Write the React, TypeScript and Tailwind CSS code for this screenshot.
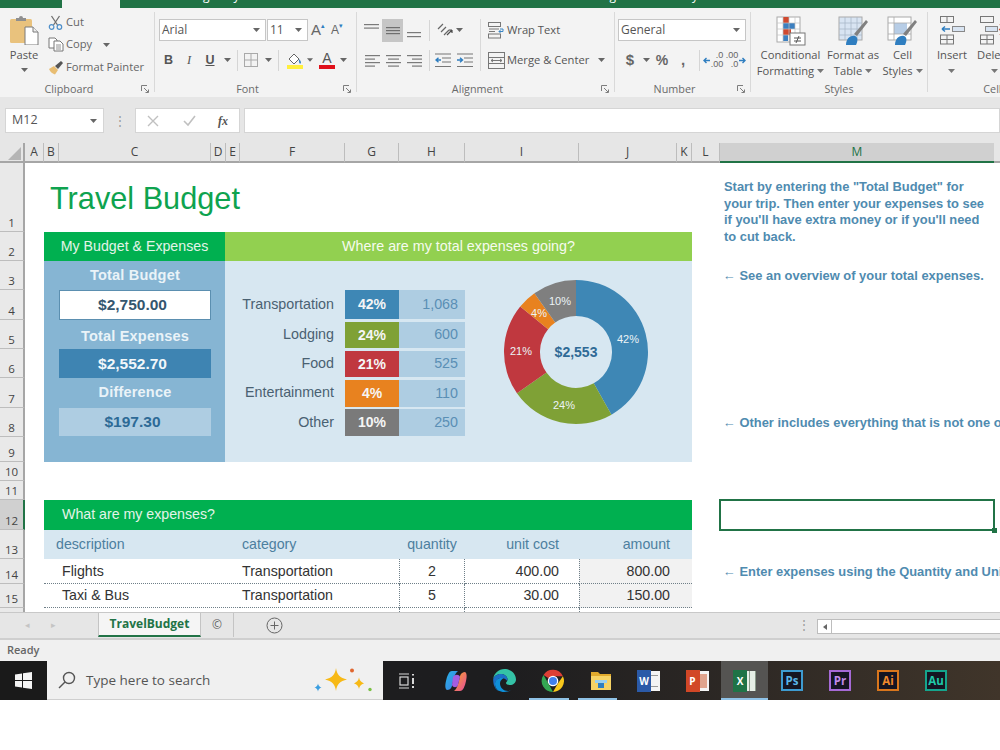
import React from "react";

const Caret = ({ c = "#666" }: { c?: string }) => (
  <svg width="7" height="4" viewBox="0 0 7 4"><path d="M0 0h7L3.5 4z" fill={c} /></svg>
);

const Lines = ({ kind }: { kind: string }) => {
  const rows: Record<string, number[][]> = {
    top: [[1, 3, 15], [1, 6.5, 15], [1, 10, 0]],
    middle: [[2, 6, 14], [2, 9, 14], [2, 12, 14]],
    bottom: [[2, 11, 14], [2, 15, 14]],
    left: [[2, 4, 15], [2, 7.5, 10], [2, 11, 15], [2, 14.5, 10]],
    center: [[2, 4, 15], [4, 7.5, 11], [2, 11, 15], [4, 14.5, 11]],
    right: [[2, 4, 15], [7, 7.5, 10], [2, 11, 15], [7, 14.5, 10]],
  };
  return (
    <svg width="18" height="18" viewBox="0 0 18 18">
      {rows[kind].filter((r) => r[2] > 0).map((r, i) => (
        <rect key={i} x={r[0]} y={r[1]} width={r[2]} height="1.2" fill={kind === "middle" ? "#6f6f6f" : "#7a7a7a"} />
      ))}
    </svg>
  );
};

const Launcher = () => (
  <svg width="9" height="9" viewBox="0 0 9 9" fill="none" stroke="#7d7d7d" strokeWidth="1">
    <path d="M.5 6V.5H6" />
    <path d="M3 3l4 4M4.5 7.5h3v-3" />
  </svg>
);

const PasteIcon = () => (
  <svg width="30" height="30" viewBox="0 0 30 30">
    <rect x="1" y="4" width="22" height="24" rx="1.5" fill="#e9c27d" />
    <path d="M7 6V3h3a2 2 0 014 0h3v3z" fill="#8f8f8f" />
    <path d="M16 12h8l5 5v13H16z" fill="#fff" stroke="#7a7a7a" />
    <path d="M24 12v5h5" fill="#eee" stroke="#7a7a7a" />
  </svg>
);

const CutIcon = () => (
  <svg width="15" height="15" viewBox="0 0 15 15" fill="none">
    <path d="M3.5 1l6 9M11.5 1l-6 9" stroke="#707070" strokeWidth="1.3" />
    <circle cx="3.6" cy="12" r="2.3" stroke="#4e8fc9" strokeWidth="1.2" />
    <circle cx="11.4" cy="12" r="2.3" stroke="#4e8fc9" strokeWidth="1.2" />
  </svg>
);

const CopyIcon = () => (
  <svg width="16" height="15" viewBox="0 0 16 15" fill="#fff" stroke="#777" strokeWidth="1">
    <path d="M1 1h6l2 2v8H1z" />
    <path d="M6 4h6l3 3v7H6z" />
    <path d="M8 8h5M8 10h5M8 12h5" strokeWidth=".8" />
  </svg>
);

const PainterIcon = () => (
  <svg width="16" height="15" viewBox="0 0 16 15">
    <path d="M1 9l5-3 4 4-3 4.5C5 14 2 12 1 9z" fill="#e8bd72" />
    <path d="M7 6l3 3 5-6-2-2z" fill="#555" />
  </svg>
);

const BordersIcon = () => (
  <svg width="14" height="14" viewBox="0 0 14 14" fill="none">
    <rect x=".5" y=".5" width="13" height="13" stroke="#a9a9a9" />
    <path d="M7 .5v13M.5 7h13" stroke="#a9a9a9" />
  </svg>
);

const FillIcon = () => (
  <svg width="18" height="18" viewBox="0 0 18 18">
    <path d="M3 8l5-5 5 5-5 5z" fill="#fff" stroke="#666" />
    <path d="M13 8c2 2 2.5 3.5 1.5 4.5S12.5 11 13 8z" fill="#3b86c4" />
    <rect x="1" y="14" width="16" height="4" fill="#ffef3d" />
  </svg>
);

const OrientIcon = () => (
  <svg width="18" height="18" viewBox="0 0 18 18" fill="none" stroke="#666" strokeWidth="1.2">
    <path d="M2 8l5-5M5 11l5-5M8 14l5-5" />
    <path d="M11 14l5-5M16 9h-3M16 9v3" stroke="#4d4d4d" />
  </svg>
);

const WrapIcon = () => (
  <svg width="17" height="17" viewBox="0 0 17 17" fill="none" stroke="#777">
    <rect x=".5" y=".5" width="12" height="4" />
    <rect x=".5" y="12" width="12" height="4" />
    <path d="M1 7h10M1 9.5h6" />
    <path d="M12 7h3v2.5h-4M12.5 8l-1.5 1.5 1.5 1.5" stroke="#3b86c4" />
  </svg>
);

const MergeIcon = () => (
  <svg width="17" height="17" viewBox="0 0 17 17" fill="none" stroke="#777">
    <rect x=".5" y=".5" width="16" height="16" />
    <path d="M.5 5.5h16M.5 11.5h16M3 8.5h11M3 8.5l2-1.5M3 8.5l2 1.5M14 8.5l-2-1.5M14 8.5l-2 1.5" />
  </svg>
);

const IndentIcon = ({ inc }: { inc?: boolean }) => (
  <svg width="16" height="15" viewBox="0 0 16 15" fill="none">
    <path d="M0 1h16M7 5h9M7 9h9M0 13.5h16" stroke="#777" strokeWidth="1.2" />
    <path d={inc ? "M0 7h5M3 4.8L5.5 7 3 9.2" : "M6 7H1M3.5 4.8L1 7l2.5 2.2"} stroke="#2f7ec0" strokeWidth="1.4" />
  </svg>
);

const DecimalIcon = ({ inc }: { inc?: boolean }) => (
  <div className="flex items-center gap-[1px]">
    {inc && (
      <svg width="7" height="7" viewBox="0 0 7 7" fill="none" stroke="#2f7ec0" strokeWidth="1.4"><path d="M7 3.500H1M3.500 1L1 3.500 3.500 6" /></svg>
    )}
    <div className="flex flex-col items-end text-[9px] leading-[9px] text-[#666] font-['Liberation_Sans',sans-serif]">
      <span>{inc ? ".0" : ".00"}</span>
      <span>{inc ? ".00" : ".0"}</span>
    </div>
    {!inc && (
      <svg width="7" height="7" viewBox="0 0 7 7" fill="none" stroke="#2f7ec0" strokeWidth="1.4"><path d="M0 3.500h6M3.500 1L6 3.500 3.500 6" /></svg>
    )}
  </div>
);

const CondIcon = () => (
  <svg width="30" height="30" viewBox="0 0 30 30">
    <rect x="1" y="1" width="23" height="25" fill="#fff" stroke="#aaa" />
    <rect x="7" y="1" width="6" height="6" fill="#d0492f" />
    <rect x="7" y="7" width="12" height="6" fill="#3d80c0" />
    <rect x="7" y="13" width="8" height="6" fill="#d0492f" />
    <rect x="7" y="19" width="5" height="6" fill="#3d80c0" />
    <path d="M1 7h23M1 13h23M1 19h23M7 1v25M13 1v25M19 1v25" stroke="#c3c3c3" strokeWidth=".7" fill="none" />
    <rect x="14" y="17" width="15" height="12" fill="#fff" stroke="#777" />
    <path d="M18 22h7M18 25h7M23 20l-3 7" stroke="#555" fill="none" />
  </svg>
);

const TableIcon = () => (
  <svg width="31" height="30" viewBox="0 0 31 30">
    <rect x="1" y="1" width="23" height="23" fill="#d8e4f2" stroke="#aaa" />
    <path d="M1 7h23M1 13h23M1 19h23M7 1v23M13 1v23M19 1v23" stroke="#a9b8c9" strokeWidth=".8" fill="none" />
    <path d="M30 6L19 20l-3-2L28 4z" fill="#808080" />
    <path d="M8 29c0-6 4-10 9-9 3 1 3 5 1 9z" fill="#2f7ec0" />
  </svg>
);

const CellStyleIcon = () => (
  <svg width="31" height="30" viewBox="0 0 31 30">
    <rect x="1" y="1" width="23" height="23" fill="#fff" stroke="#aaa" />
    <rect x="7" y="7" width="13" height="11" fill="#b7cde6" />
    <path d="M1 7h23M1 18h23M7 1v23" stroke="#aaa" strokeWidth=".8" fill="none" />
    <path d="M30 6L19 20l-3-2L28 4z" fill="#808080" />
    <path d="M8 29c0-6 4-10 9-9 3 1 3 5 1 9z" fill="#2f7ec0" />
  </svg>
);

const InsertIcon = () => (
  <svg width="27" height="29" viewBox="0 0 27 29" fill="none" stroke="#777">
    <rect x="1.500" y=".5" width="13" height="6" />
    <path d="M8 .5v6" />
    <rect x="1.500" y="19" width="13" height="9" />
    <path d="M8 19v9M1.500 23.500h13" />
    <path d="M3 13h8M3 13l3-2.500M3 13l3 2.500" stroke="#2f7ec0" strokeWidth="1.500" />
    <rect x="13.500" y="10.500" width="12" height="5" fill="#d8e4f2" stroke="#888" />
  </svg>
);

const DeleteIcon = () => (
  <svg width="30" height="29" viewBox="0 0 30 29" fill="none" stroke="#777">
    <rect x="1.500" y=".5" width="13" height="6" />
    <rect x="1.500" y="19" width="13" height="9" />
    <path d="M8 19v9M1.500 23.500h13" />
    <rect x="6.500" y="10.500" width="12" height="5" fill="#d8e4f2" stroke="#888" />
    <path d="M21 8l6 5.500-6 5.500M27 8l-6 5.500 6 5.500" stroke="#d0492f" strokeWidth="1.800" />
  </svg>
);

const Group = ({ label, w, launcher, children }: { label: string; w: string; launcher?: boolean; children: React.ReactNode }) => (
  <div className={`${w} shrink-0 flex flex-col`}>
    <div className="h-[74px]">{children}</div>
    <div className={`relative h-[15px] flex items-center justify-center text-[10.800px] text-[#6a6a6a] ${launcher ? "pr-[16px]" : ""}`}>
      {label}
      {launcher && <span className="absolute right-[4px] top-[3px] flex"><Launcher /></span>}
    </div>
  </div>
);

const Sep = () => <div className="w-[1px] h-[80px] mt-[4px] bg-[#d9d9d9] shrink-0" />;

const Select = ({ text, w }: { text: string; w: string }) => (
  <div className={`${w} h-[22px] bg-white border border-[#c6c6c6] flex items-center justify-between pl-[2px] pr-[5px] text-[12px] text-[#555] shrink-0`}>
    <span>{text}</span>
    <Caret />
  </div>
);

const Btn = ({ w, children }: { w: string; children: React.ReactNode }) => (
  <div className={`${w} h-[22px] flex items-center justify-center shrink-0`}>{children}</div>
);

const VSep = ({ m }: { m: string }) => <div className={`${m} w-[1px] h-[21px] bg-[#d5d5d5] shrink-0`} />;

const BigBtn = ({ w, icon, lines, caret }: { w: string; icon: React.ReactNode; lines: string[]; caret?: boolean }) => (
  <div className={`${w} shrink-0 flex flex-col items-center pt-[7px]`}>
    <div className="h-[31px] flex items-center">{icon}</div>
    <div className="text-[11.200px] leading-[16px] text-[#555] text-center whitespace-nowrap mt-[1px]">
      <div>{lines[0]}</div>
      {caret ? (
        <div className="flex items-center justify-center gap-[3px]">{lines[1]}<Caret c="#777" /></div>
      ) : (
        <div className="h-[16px] flex items-center justify-center"><Caret c="#777" /></div>
      )}
    </div>
  </div>
);

const Ribbon = () => (
  <div className="h-[89px] bg-[#f3f3f3] flex shrink-0 font-['Open_Sans',sans-serif]">
    <Group label="Clipboard" w="w-[154px]" launcher>
      <div className="flex">
        <div className="w-[48px] flex flex-col items-center pt-[7px] text-[11.200px] text-[#555]">
          <PasteIcon />
          <div className="leading-[16px] mt-[2px]">Paste</div>
          <div className="mt-[5px] flex"><Caret /></div>
        </div>
        <div className="flex flex-col pt-[3px] text-[11.200px] text-[#666]">
          {[
            { i: <CutIcon />, t: "Cut", c: false },
            { i: <CopyIcon />, t: "Copy", c: true },
            { i: <PainterIcon />, t: "Format Painter", c: false },
          ].map((r) => (
            <div key={r.t} className="h-[22.500px] flex items-center">
              <span className="w-[18px] flex">{r.i}</span>
              <span>{r.t}</span>
              {r.c && <span className="ml-[11px] flex"><Caret /></span>}
            </div>
          ))}
        </div>
      </div>
    </Group>
    <Sep />
    <Group label="Font" w="w-[201px]" launcher>
      <div className="pl-[4px] pt-[11px]">
        <div className="flex items-center h-[22px]">
          <Select text="Arial" w="w-[107px]" />
          <div className="w-[1px]" />
          <Select text="11" w="w-[41px]" />
          <div className="ml-[3px] w-[20px] flex items-center text-[15px] text-[#666] font-['Liberation_Sans',sans-serif]">A<span className="text-[7px] text-[#2f7ec0] -mt-[8px]">▴</span></div>
          <div className="w-[20px] flex items-center text-[12px] text-[#666] font-['Liberation_Sans',sans-serif]">A<span className="text-[7px] text-[#2f7ec0] -mt-[8px]">▾</span></div>
        </div>
        <div className="flex items-center h-[22px] mt-[8px] text-[#555] font-['Liberation_Sans',sans-serif] text-[12.500px]">
          <Btn w="w-[19px]"><b>B</b></Btn>
          <Btn w="w-[22px]"><i className="font-['Liberation_Serif',serif]">I</i></Btn>
          <Btn w="w-[20px]"><u className="font-bold">U</u></Btn>
          <Btn w="w-[14px]"><Caret /></Btn>
          <VSep m="ml-[3px]" />
          <Btn w="w-[24px] ml-[1px]"><BordersIcon /></Btn>
          <Btn w="w-[10px]"><Caret /></Btn>
          <VSep m="ml-[5px]" />
          <Btn w="w-[24px] ml-[4px]"><FillIcon /></Btn>
          <Btn w="w-[6px]"><Caret /></Btn>
          <Btn w="w-[24px] ml-[2px]">
            <span className="flex flex-col items-center text-[14px] leading-[13px] text-[#555]">A<span className="w-[16px] h-[4px] bg-[#e0101a]" /></span>
          </Btn>
          <Btn w="w-[8px]"><Caret /></Btn>
        </div>
      </div>
    </Group>
    <Sep />
    <Group label="Alignment" w="w-[257px]" launcher>
      <div className="flex pt-[11px]">
        <div className="w-[123px] pl-[5px]">
          <div className="flex items-center h-[22px]">
            <Btn w="w-[20px]"><Lines kind="top" /></Btn>
            <Btn w="w-[21px] bg-[#c6c6c6] h-[23px]"><Lines kind="middle" /></Btn>
            <Btn w="w-[21px]"><Lines kind="bottom" /></Btn>
            <VSep m="ml-[5px]" />
            <Btn w="w-[20px] ml-[5px]"><OrientIcon /></Btn>
            <Btn w="w-[8px]"><Caret /></Btn>
          </div>
          <div className="flex items-center h-[22px] mt-[8px]">
            <Btn w="w-[20px]"><Lines kind="left" /></Btn>
            <Btn w="w-[21px]"><Lines kind="center" /></Btn>
            <Btn w="w-[21px]"><Lines kind="right" /></Btn>
            <VSep m="ml-[5px]" />
            <Btn w="w-[20px] ml-[3px]"><IndentIcon /></Btn>
            <Btn w="w-[20px] ml-[2px]"><IndentIcon inc /></Btn>
          </div>
        </div>
        <div className="w-[1px] h-[52px] bg-[#d9d9d9]" />
        <div className="pl-[7px] text-[11.200px] text-[#555]">
          <div className="flex items-center h-[22px]">
            <span className="w-[19px] flex"><WrapIcon /></span>Wrap Text
          </div>
          <div className="flex items-center h-[22px] mt-[8px]">
            <span className="w-[19px] flex"><MergeIcon /></span>Merge &amp; Center
            <span className="ml-[9px] flex"><Caret /></span>
          </div>
        </div>
      </div>
    </Group>
    <Sep />
    <Group label="Number" w="w-[135px]" launcher>
      <div className="pl-[3px] pt-[11px]">
        <Select text="General" w="w-[128px]" />
        <div className="flex items-center h-[22px] mt-[8px] text-[#666] font-['Liberation_Sans',sans-serif]">
          <Btn w="w-[24px]"><span className="text-[15px] font-bold">$</span></Btn>
          <Btn w="w-[12px] ml-[-2px]"><Caret /></Btn>
          <Btn w="w-[22px] ml-[-1px]"><span className="text-[14px] font-bold">%</span></Btn>
          <Btn w="w-[20px]"><span className="text-[15px] font-bold">,</span></Btn>
          <VSep m="ml-[6px]" />
          <Btn w="w-[22px] ml-[2px]"><DecimalIcon inc /></Btn>
          <Btn w="w-[22px] ml-[1px]"><DecimalIcon /></Btn>
        </div>
      </div>
    </Group>
    <Sep />
    <Group label="Styles" w="w-[176px]">
      <div className="flex pl-[2px]">
        <BigBtn w="w-[75px]" icon={<CondIcon />} lines={["Conditional", "Formatting"]} caret />
        <BigBtn w="w-[50px]" icon={<TableIcon />} lines={["Format as", "Table"]} caret />
        <BigBtn w="w-[49px]" icon={<CellStyleIcon />} lines={["Cell", "Styles"]} caret />
      </div>
    </Group>
    <Sep />
    <Group label="Cells" w="w-[134px]">
      <div className="flex pl-[5px]">
        <BigBtn w="w-[38px]" icon={<InsertIcon />} lines={["Insert", ""]} />
        <BigBtn w="w-[42px] ml-[2px]" icon={<DeleteIcon />} lines={["Delete", ""]} />
      </div>
    </Group>
  </div>
);

const FormulaBar = () => (
  <div className="h-[46px] bg-[#e6e6e6] shrink-0 pt-[11px] flex items-start font-['Open_Sans',sans-serif]">
    <div className="ml-[5px] w-[99px] h-[25px] bg-white border border-[#d5d5d5] flex items-center justify-between pl-[6px] pr-[6px] text-[12.500px] text-[#555]">
      M12<Caret />
    </div>
    <div className="w-[31px] h-[25px] flex items-center justify-center text-[#999] text-[12px]">⋮</div>
    <div className="w-[105px] h-[25px] bg-white border border-[#d5d5d5] flex items-center text-[#bbb]">
      <svg className="ml-[11px]" width="12" height="12" viewBox="0 0 12 12" fill="none" stroke="#c0c0c0" strokeWidth="1.400"><path d="M1 1l10 10M11 1L1 11" /></svg>
      <svg className="ml-[24px]" width="13" height="12" viewBox="0 0 13 12" fill="none" stroke="#c0c0c0" strokeWidth="1.600"><path d="M1 6l4 4 7-9" /></svg>
      <span className="ml-[22px] text-[12px] italic font-bold text-[#555] font-['Liberation_Serif',serif]">fx</span>
    </div>
    <div className="ml-[4px] flex-1 h-[25px] bg-white border border-[#d5d5d5]" />
  </div>
);

const slices = [
  { v: 41.8, c: "#3e87b5" },
  { v: 23.5, c: "#7fa136" },
  { v: 20.6, c: "#c0383f" },
  { v: 4.3, c: "#e8821f" },
  { v: 9.8, c: "#7f7f7f" },
];

const Donut = () => {
  let a = 0;
  const pt = (deg: number, r: number) => {
    const t = ((deg - 90) * Math.PI) / 180;
    return `${(r * Math.cos(t)).toFixed(2)} ${(r * Math.sin(t)).toFixed(2)}`;
  };
  return (
    <svg width="150" height="150" viewBox="-75 -75 150 150" className="font-['Liberation_Sans',sans-serif]">
      {slices.map((s) => {
        const start = a;
        const end = a + s.v * 3.6;
        a = end;
        const large = end - start > 180 ? 1 : 0;
        return (
          <path
            key={s.c}
            d={`M${pt(start, 72)}A72 72 0 ${large} 1 ${pt(end, 72)}L${pt(end, 36)}A36 36 0 ${large} 0 ${pt(start, 36)}Z`}
            fill={s.c}
          />
        );
      })}
      <text x="0" y="5" textAnchor="middle" fontSize="14" fontWeight="700" fill="#2f6a96">$2,553</text>
      <g fontSize="11" fill="#ecf3f6" textAnchor="middle">
        <text x="52" y="-9">42%</text>
        <text x="-12" y="57">24%</text>
        <text x="-55" y="3">21%</text>
        <text x="-37" y="-35">4%</text>
        <text x="-16" y="-47">10%</text>
      </g>
    </svg>
  );
};

const colHeads = [
  { t: "A", c: "col-[2]" }, { t: "B", c: "col-[3]" }, { t: "C", c: "col-[4]" }, { t: "D", c: "col-[5]" },
  { t: "E", c: "col-[6]" }, { t: "F", c: "col-[7]" }, { t: "G", c: "col-[8]" }, { t: "H", c: "col-[9]" },
  { t: "I", c: "col-[10]" }, { t: "J", c: "col-[11]" }, { t: "K", c: "col-[12]" }, { t: "L", c: "col-[13]" },
];

const rowHeads = [
  { n: 1, c: "row-[2]" }, { n: 2, c: "row-[3]" }, { n: 3, c: "row-[4]" }, { n: 4, c: "row-[5]" },
  { n: 5, c: "row-[6]" }, { n: 6, c: "row-[7]" }, { n: 7, c: "row-[8]" }, { n: 8, c: "row-[9]" },
  { n: 9, c: "row-[10]" }, { n: 10, c: "row-[11]" }, { n: 11, c: "row-[12]" }, { n: 13, c: "row-[14]" },
  { n: 14, c: "row-[15]" }, { n: 15, c: "row-[16]" },
];

const cats = [
  { l: "Transportation", p: "42%", v: "1,068", bg: "bg-[#3e87b5]", r: "row-[5]", m: "" },
  { l: "Lodging", p: "24%", v: "600", bg: "bg-[#7fa136]", r: "row-[6]", m: "mt-[2px]" },
  { l: "Food", p: "21%", v: "525", bg: "bg-[#c0383f]", r: "row-[7]", m: "mt-[2px]" },
  { l: "Entertainment", p: "4%", v: "110", bg: "bg-[#e8821f]", r: "row-[8]", m: "mt-[2px]" },
  { l: "Other", p: "10%", v: "250", bg: "bg-[#7a7a7a]", r: "row-[9]", m: "mt-[1px]" },
];

const dot = "border-b border-dotted border-[#6f7f88]";
const dotV = "border-x border-dotted border-[#6f7f88]";

const expenses = [
  { d: "Flights", c: "Transportation", q: "2", u: "400.00", a: "800.00", r: "row-[15]" },
  { d: "Taxi & Bus", c: "Transportation", q: "5", u: "30.00", a: "150.00", r: "row-[16]" },
];

const Sheet = () => (
  <div className="h-[469px] shrink-0 grid grid-cols-[25px_19px_15px_152px_15px_14px_105px_54px_66px_114px_98px_15px_28px_274px_1fr] grid-rows-[20px_69px_29px_29px_30px_29px_29px_30px_29px_25px_19px_19px_30px_29px_25px_24px_4px] overflow-hidden bg-white font-['Liberation_Sans',sans-serif]">
    {/* headers */}
    <div className="col-[1] row-[1] bg-[#e6e6e6] border-r-2 border-b-2 border-[#a6a6a6] flex items-end justify-end pr-[2px] pb-[1px]">
      <svg width="13" height="13" viewBox="0 0 13 13"><path d="M13 0v13H0z" fill="#b5b5b5" /></svg>
    </div>
    {colHeads.map((h) => (
      <div key={h.t} className={`${h.c} row-[1] bg-[#e6e6e6] border-r border-b-2 border-r-[#bdbdbd] border-b-[#a6a6a6] flex items-center justify-center text-[12px] text-[#444] font-['Open_Sans',sans-serif]`}>{h.t}</div>
    ))}
    <div className="col-[14] row-[1] bg-[#d0d0d0] border-b-2 border-[#217346] flex items-center justify-center text-[12px] text-[#217346] font-['Open_Sans',sans-serif]">M</div>
    <div className="col-[15] row-[1] bg-[#e6e6e6] border-b-2 border-[#a6a6a6]" />
    {rowHeads.map((h) => (
      <div key={h.n} className={`col-[1] ${h.c} bg-[#e9e9e9] border-r-2 border-r-[#a6a6a6] border-b border-b-[#bdbdbd] flex items-end justify-center pb-[1px] text-[11.500px] leading-[14px] text-[#444] font-['Open_Sans',sans-serif]`}>{h.n}</div>
    ))}
    <div className="col-[1] row-[13] bg-[#d0d0d0] border-r-2 border-r-[#217346] border-b border-b-[#bdbdbd] flex items-end justify-center pb-[1px] text-[11.500px] leading-[14px] text-[#444] font-['Open_Sans',sans-serif]">12</div>
    <div className="col-[1] row-[17] bg-[#e9e9e9] border-r-2 border-r-[#a6a6a6]" />

    {/* title */}
    <div className="col-[3/12] row-[2] flex items-start pl-[6px] pt-[17px] text-[30.700px] leading-[37px] text-[#0ea34f]">Travel Budget</div>

    {/* band heads */}
    <div className="col-[3/6] row-[3] mr-[1px] bg-[#00b050] flex items-center justify-center text-[14.200px] text-[#e3f4e8]">My Budget &amp; Expenses</div>
    <div className="col-[6/13] row-[3] -ml-[1px] bg-[#92d050] flex items-center justify-center text-[14.300px] text-[#f6fbee]">Where are my total expenses going?</div>

    {/* left panel */}
    <div className="col-[3/6] row-[4/11] mr-[1px] bg-[#86b5d3]" />
    <div className="col-[4] row-[4] flex items-center justify-center pt-[1px] text-[14.500px] tracking-[0.2px] font-bold text-[#eaf3f8]">Total Budget</div>
    <div className="col-[4] row-[5] bg-white border border-[#5b8fb0] flex items-center justify-center pr-[5px] text-[15.500px] font-bold text-[#34566f]">$2,750.00</div>
    <div className="col-[4] row-[6] flex items-center justify-center pt-[5px] text-[14.500px] tracking-[0.2px] font-bold text-[#eaf3f8]">Total Expenses</div>
    <div className="col-[4] row-[7] bg-[#3e84b2] flex items-center justify-center pr-[5px] text-[15.500px] font-bold text-[#f2f7fa]">$2,552.70</div>
    <div className="col-[4] row-[8] flex items-center justify-center text-[14.500px] tracking-[0.2px] font-bold text-[#eaf3f8]">Difference</div>
    <div className="col-[4] row-[9] mb-[1px] bg-[#aecde2] flex items-center justify-center pr-[5px] text-[15.500px] font-bold text-[#2d6a96]">$197.30</div>

    {/* right panel */}
    <div className="col-[6/13] row-[4/11] -ml-[1px] bg-[#d7e7f1]" />
    {cats.map((c) => (
      <React.Fragment key={c.l}>
        <div className={`col-[7] ${c.r} flex items-center justify-end pr-[11px] text-[14.300px] text-[#4a6172]`}>{c.l}</div>
        <div className={`col-[8] ${c.r} ${c.bg} ${c.m} mb-[1px] flex items-center justify-center text-[14px] font-bold text-[#f5f5f5]`}>{c.p}</div>
        <div className={`col-[9] ${c.r} ${c.m} mb-[1px] bg-[#aecde2] flex items-center justify-end pr-[7px] text-[14.300px] text-[#5a8fb5]`}>{c.v}</div>
      </React.Fragment>
    ))}
    <div className="col-[10/12] row-[4/11] pl-[36px] pt-[16px]"><Donut /></div>

    {/* notes */}
    <div className="col-[14/16] row-[2/4] pl-[4px] pt-[16px] text-[12.900px] leading-[16.500px] font-bold text-[#4f8bb0] whitespace-nowrap">
      Start by entering the "Total Budget" for<br />your trip. Then enter your expenses to see<br />if you'll have extra money or if you'll need<br />to cut back.
    </div>
    <div className="col-[14/16] row-[4] pl-[3px] flex items-center text-[12.900px] font-bold text-[#4f8bb0] whitespace-nowrap pt-[1px]">← See an overview of your total expenses.</div>
    <div className="col-[14/16] row-[9] min-w-0 overflow-hidden pl-[3px] flex items-center text-[12.900px] font-bold text-[#4f8bb0] whitespace-nowrap">← Other includes everything that is not one of the above.</div>
    <div className="col-[14/16] row-[15] min-w-0 overflow-hidden pl-[3px] flex items-center text-[12.900px] font-bold text-[#4f8bb0] whitespace-nowrap">← Enter expenses using the Quantity and Unit Cost columns.</div>

    {/* selection */}
    <div className="col-[14] row-[13] relative -m-[1px] border-2 border-[#217346]">
      <span className="absolute -right-[4px] -bottom-[4px] w-[5px] h-[5px] bg-[#217346]" />
    </div>

    {/* expenses table */}
    <div className="col-[3/13] row-[13] bg-[#00b050] flex items-center pl-[18px] text-[14.200px] text-[#e3f4e8]">What are my expenses?</div>
    <div className="col-[3/7] row-[14] bg-[#d7e7f1] flex items-center pl-[12px] pt-[1px] text-[14.200px] text-[#4d7f9f]">description</div>
    <div className="col-[7/9] row-[14] bg-[#d7e7f1] flex items-center pl-[2px] pt-[1px] text-[14.200px] text-[#4d7f9f]">category</div>
    <div className="col-[9] row-[14] bg-[#d7e7f1] flex items-center justify-center pt-[1px] text-[14.200px] text-[#4d7f9f]">quantity</div>
    <div className="col-[10] row-[14] bg-[#d7e7f1] flex items-center justify-end pr-[20px] pt-[1px] text-[14.200px] text-[#4d7f9f]">unit cost</div>
    <div className="col-[11/13] row-[14] bg-[#d7e7f1] flex items-center justify-end pr-[22px] pt-[1px] text-[14.200px] text-[#4d7f9f]">amount</div>
    {expenses.map((e) => (
      <React.Fragment key={e.d}>
        <div className={`col-[3/7] ${e.r} ${dot} flex items-center pl-[18px] pt-[1px] text-[14.200px] text-[#333]`}>{e.d}</div>
        <div className={`col-[7/9] ${e.r} ${dot} flex items-center pl-[2px] pt-[1px] text-[14.200px] text-[#333]`}>{e.c}</div>
        <div className={`col-[9] ${e.r} ${dot} ${dotV} flex items-center justify-center pt-[1px] text-[14.200px] text-[#333]`}>{e.q}</div>
        <div className={`col-[10] ${e.r} ${dot} flex items-center justify-end pr-[20px] pt-[1px] text-[14.200px] text-[#333]`}>{e.u}</div>
        <div className={`col-[11/13] ${e.r} ${dot} border-l border-l-dotted border-l-[#6f7f88] bg-[#f2f2f2] flex items-center justify-end pr-[22px] pt-[1px] text-[14.200px] text-[#333]`}>{e.a}</div>
      </React.Fragment>
    ))}
    <div className={`col-[9] row-[17] ${dotV}`} />
    <div className="col-[11] row-[17] border-l border-dotted border-[#6f7f88]" />
  </div>
);

const Tabs = () => (
  <div className="h-[28px] shrink-0 bg-[#e6e6e6] border-t border-[#c8c8c8] border-b-2 border-b-[#cfcfcf] flex items-start font-['Open_Sans',sans-serif]">
    <div className="w-[98px] h-[24px] flex items-center text-[9px] text-[#c4c4c4]">
      <span className="ml-[25px]">◂</span><span className="ml-[21px]">▸</span>
    </div>
    <div className="w-[103px] h-[24px] bg-[#f5f5f5] border-x border-x-[#c4c4c4] border-b-2 border-b-[#217346] flex items-center justify-center text-[12px] font-bold text-[#217346]">TravelBudget</div>
    <div className="w-[33px] h-[24px] flex items-center justify-center text-[12px] text-[#666] border-r border-[#c4c4c4]">©</div>
    <div className="ml-[32px] h-[24px] flex items-center">
      <svg width="17" height="17" viewBox="0 0 17 17" fill="none" stroke="#666"><circle cx="8.500" cy="8.500" r="7.500" /><path d="M8.500 4.500v8M4.500 8.500h8" /></svg>
    </div>
    <div className="ml-[515px] h-[24px] flex items-center text-[#999] text-[12px]">⋮</div>
    <div className="ml-[7px] mt-[6px] w-[15px] h-[15px] bg-white border border-[#bdbdbd] flex items-center justify-center">
      <svg width="4" height="6" viewBox="0 0 4 6"><path d="M4 0v6L0 3z" fill="#666" /></svg>
    </div>
    <div className="mt-[6px] flex-1 h-[15px] bg-white border-y border-[#bdbdbd]" />
  </div>
);

const Tile = ({ t, border, text }: { t: string; border: string; text: string }) => (
  <div className={`w-[22px] h-[21px] bg-[#151522] border-2 ${border} ${text} flex items-center justify-center text-[11.500px] leading-none font-bold font-['Open_Sans',sans-serif]`}>{t}</div>
);

const Slot = ({ w, extra, children }: { w: string; extra?: string; children: React.ReactNode }) => (
  <div className={`${w} h-full shrink-0 flex items-center justify-center ${extra ?? ""}`}>{children}</div>
);

const Taskbar = () => (
  <div className="h-[39px] shrink-0 flex bg-gradient-to-r from-[#1d1d1f] from-50% to-[#40352a] font-['Open_Sans',sans-serif]">
    <Slot w="w-[47px]" extra="bg-[#1a1a1a]">
      <svg width="17" height="17" viewBox="0 0 17 17" fill="#f4f4f4"><path d="M0 2.500l7-1v6.500H0zM8 1.300L17 0v8H8zM0 9h7v6.500l-7-1zM8 9h9v8l-9-1.300z" /></svg>
    </Slot>
    <div className="w-[336px] h-full bg-[#f0f0f0] border-b border-[#cfcfcf] flex items-center text-[13.500px] text-[#555] shrink-0">
      <svg className="ml-[11px]" width="18" height="18" viewBox="0 0 18 18" fill="none" stroke="#555" strokeWidth="1.400"><circle cx="11" cy="7" r="5.500" /><path d="M7 11l-6 6" /></svg>
      <span className="ml-[10px]">Type here to search</span>
      <svg className="ml-auto mr-[10px]" width="60" height="32" viewBox="0 0 60 32">
        <path d="M23 4c1 7 4 10 11 11.500-7 1.500-10 4.500-11 11.500-1-7-4-10-11-11.500C19 14 22 11 23 4z" fill="#f7b916" />
        <path d="M46 13.500c.5 3 2 4.500 5 6-3 1-4.500 2.500-5 5.500-.5-3-2-4.500-5-5.500 3-1.500 4.500-3 5-6z" fill="#f7b916" />
        <path d="M5 19.500c.4 2 1.500 3.500 3.500 4C6.500 24 5.400 25.500 5 27.500c-.4-2-1.500-3.500-3.500-4 2-.5 3.100-2 3.500-4z" fill="#3b9ee0" />
        <circle cx="39" cy="6.500" r="2" fill="#e0662f" />
        <circle cx="57" cy="25.500" r="1.700" fill="#7ac143" />
      </svg>
    </div>
    <Slot w="w-[48px]">
      <svg width="18" height="16" viewBox="0 0 18 16" fill="none" stroke="#d8d8d8" strokeWidth="1.200"><path d="M1 1h10M1 15h10" /><rect x="2" y="4" width="8" height="8" /><path d="M15 1v1.500M15 5v6M15 13v2" strokeWidth="2" /></svg>
    </Slot>
    <Slot w="w-[49px]">
      <svg width="24" height="24" viewBox="0 0 24 24">
        <defs>
          <linearGradient id="cp1" x1="0" y1="0" x2="1" y2="1"><stop offset="0" stopColor="#27b5e8" /><stop offset="1" stopColor="#3f7be0" /></linearGradient>
          <linearGradient id="cp2" x1="0" y1="0" x2="1" y2="1"><stop offset="0" stopColor="#f5a623" /><stop offset="1" stopColor="#e84aa0" /></linearGradient>
        </defs>
        <path d="M8 2h6c-3 2-5 9-6 15-1 3-3 4-5 4-2-1-2-5-1-9 1-5 3-10 6-10z" fill="url(#cp1)" />
        <path d="M16 22h-6c3-2 5-9 6-15 1-3 3-4 5-4 2 1 2 5 1 9-1 5-3 10-6 10z" fill="url(#cp2)" />
        <path d="M9 8c2-3 6-3 7 0l-2 8c-1 3-5 3-6 0z" fill="#a45de0" />
      </svg>
    </Slot>
    <Slot w="w-[48px]">
      <svg width="25" height="25" viewBox="0 0 25 25">
        <path d="M12.500 1C19 1 24 6 24 11.500c0 3.500-3 5.500-6 5.500-2.500 0-4-.8-4-2 0-1 1.500-1.500 1.500-3.500C15.500 8 12 6 8.500 6 5 6 2 8.500 1.200 11 1.800 5.500 6.500 1 12.500 1z" fill="#34c2a6" />
        <path d="M1.200 11C2 8.500 5 6 8.500 6c3.500 0 7 2 7 5.500 0 .5-.1 1-.3 1.400-1-1.900-3.500-2.900-6-2.900-3.500 0-6.200 3-6.200 6.500 0 2.500 1 4.800 3 6.500C2.800 20.800 1 16 1.200 11z" fill="#1b6fc7" />
        <path d="M6 22.500c-2-1.700-3-4-3-6.500 0-3.500 2.700-6 6.200-6 .8 0 1.500.100 2.200.3-2 1-3.400 3-3.400 5.200 0 4 3.500 7.500 8 7.500 1 0 2-.2 2.800-.5C16.800 23.300 14.800 24 12.500 24c-2.500 0-4.700-.6-6.500-1.500z" fill="#0f8fd8" />
      </svg>
    </Slot>
    <Slot w="w-[49px]" extra="relative">
      <svg width="24" height="24" viewBox="0 0 24 24">
        <path d="M12 12L2.500 6A11 11 0 0121.900 7.200H12z" fill="#dc3f35" />
        <path d="M12 23A11 11 0 012.500 6L8 15.500z" fill="#34a853" />
        <path d="M21.900 7.200A11 11 0 0112 23l4.500-8z" fill="#f9c81c" />
        <circle cx="12" cy="12" r="5.300" fill="#fff" />
        <circle cx="12" cy="12" r="4" fill="#3f80ee" />
      </svg>
      <span className="absolute bottom-0 left-[1px] w-[40px] h-[2px] bg-[#8fc2e6]" />
    </Slot>
    <Slot w="w-[47px]" extra="relative">
      <svg width="22" height="20" viewBox="0 0 22 20">
        <path d="M1 1h7l2 2h11v4H1z" fill="#e0a92c" />
        <rect x="1" y="5" width="20" height="14" fill="#f6d365" />
        <rect x="5" y="9" width="12" height="3" fill="#9ad0ee" />
        <rect x="8" y="12" width="6" height="5" fill="#2f7ec0" />
      </svg>
      <span className="absolute bottom-0 left-[1px] w-[39px] h-[2px] bg-[#8fc2e6]" />
    </Slot>
    <Slot w="w-[49px]">
      <div className="relative w-[22px] h-[20px] bg-[#f4f4f4] ml-[1px] flex justify-end">
        <span className="w-[9px] mt-[4px] mr-[2px] h-[12px] border-y border-[#999]" />
        <span className="absolute -left-[1px] -top-[1px] w-[14px] h-[22px] bg-[#2b5aa8] text-white text-[10px] leading-[22px] font-bold text-center">W</span>
      </div>
    </Slot>
    <Slot w="w-[48px]">
      <div className="relative w-[22px] h-[20px] bg-[#f4f4f4] ml-[1px] flex justify-end">
        <span className="w-[7px] mt-[3px] mr-[2px] h-[14px] bg-[#e0a48e]" />
        <span className="absolute -left-[1px] -top-[1px] w-[14px] h-[22px] bg-[#d24726] text-white text-[10px] leading-[22px] font-bold text-center">P</span>
      </div>
    </Slot>
    <Slot w="w-[47px]" extra="relative bg-[#555452]">
      <div className="relative w-[22px] h-[20px] bg-[#e6efe6] ml-[1px] flex justify-end">
        <span className="w-[7px] h-full border-x border-[#8a9a8a]" />
        <span className="absolute -left-[1px] -top-[1px] w-[14px] h-[22px] bg-[#1f7346] text-white text-[10px] leading-[22px] font-bold text-center">X</span>
      </div>
      <span className="absolute bottom-0 left-0 w-full h-[2px] bg-[#8fc2e6]" />
    </Slot>
    <Slot w="w-[48px]"><Tile t="Ps" border="border-[#3e9bd0]" text="text-[#58b4e8]" /></Slot>
    <Slot w="w-[48px]"><Tile t="Pr" border="border-[#a66ad6]" text="text-[#c08ae8]" /></Slot>
    <Slot w="w-[48px]"><Tile t="Ai" border="border-[#d9761c]" text="text-[#f08a2c]" /></Slot>
    <Slot w="w-[48px]"><Tile t="Au" border="border-[#15a58d]" text="text-[#20c8a8]" /></Slot>
  </div>
);

export default function App() {
  return (
    <div className="w-[1000px] h-[750px] overflow-hidden bg-white flex flex-col">
      <div className="h-[8px] bg-[#217346] shrink-0 flex overflow-hidden text-[12px] leading-[14px] text-white font-['Open_Sans',sans-serif]">
        <div className="w-[62px] pl-[20px] -mt-[11px]">File</div>
        <div className="w-[58px] h-full bg-[#f3f3f3]" />
        <div className="ml-[83px] -mt-[11px]">g</div>
        <div className="ml-[24px] -mt-[11px]">y</div>
        <div className="ml-[370px] -mt-[11px]">g</div>
        <div className="ml-[76px] -mt-[11px]">y</div>
      </div>
      <Ribbon />
      <FormulaBar />
      <Sheet />
      <Tabs />
      <div className="h-[21px] shrink-0 bg-[#f0f0f0] flex items-center pl-[7px] text-[11px] font-semibold text-[#666] font-['Open_Sans',sans-serif]">Ready</div>
      <Taskbar />
    </div>
  );
}
